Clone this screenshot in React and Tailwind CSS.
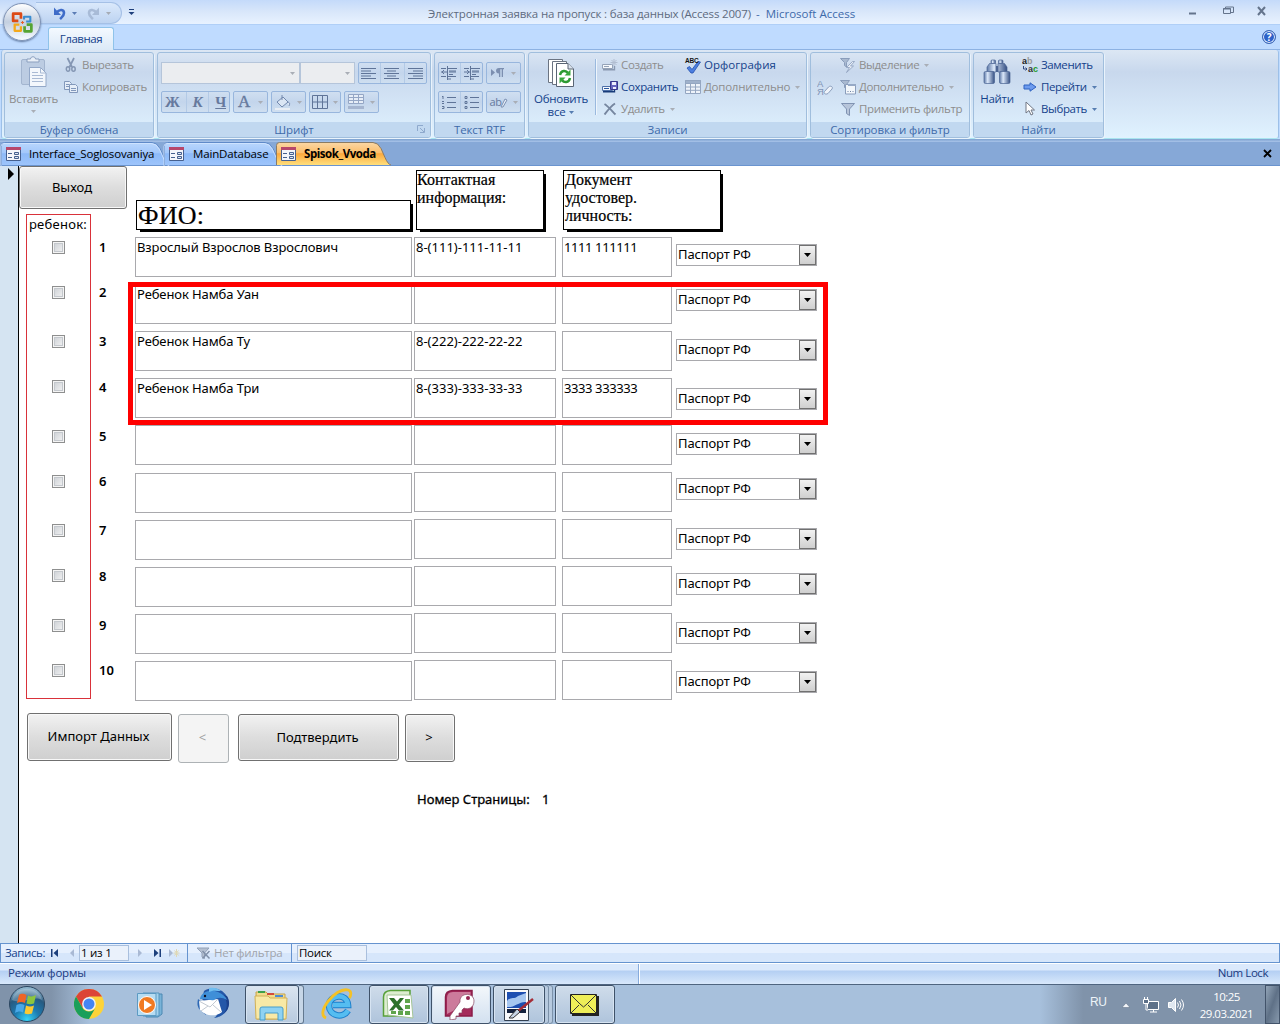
import React from "react";

const ui = "font-['Open_Sans','Noto_Sans',sans-serif] text-[11.5px] tracking-[-0.25px] whitespace-nowrap";

function Down({ c = "#8f9299" }) {
  return (
    <svg width="5" height="3" viewBox="0 0 5 3" className="shrink-0">
      <path d="M0 0h5L2.5 3z" fill={c} />
    </svg>
  );
}

function Group({ title, width, children, launcher }) {
  return (
    <section className={"flex h-[86px] shrink-0 flex-col overflow-hidden rounded-[3px] border border-[#a0bedd] shadow-[1px_1px_0_#e9f3fc] " + width}>
      <div className="flex h-[69px] shrink-0">{children}</div>
      <div className="relative flex h-[16px] items-center justify-center bg-[#c1d8f0] text-[#3e6aaa]">
        <span className="leading-[14px] tracking-[-0.1px]">{title}</span>
        {launcher && (
          <svg className="absolute right-[5px] top-[3px]" width="8" height="8" fill="none" stroke="#8ea9cd">
            <path d="M.5 6V.5H6M3 3l4 4M7.500 3v4.500H3" />
          </svg>
        )}
      </div>
    </section>
  );
}

function Cmd({ icon, label, on, arrow }) {
  return (
    <div className={"flex h-[22px] items-center " + (on ? "text-[#15428b]" : "text-[#8d8d8d]")}>
      <span className="mr-[3px] flex w-[16px] shrink-0 justify-center">{icon}</span>
      <span>{label}</span>
      {arrow && <span className="ml-[5px]"><Down c={on ? "#567db1" : "#a9aeb6"} /></span>}
    </div>
  );
}

function Box({ width, children }) {
  return (
    <div className={"flex h-[22px] shrink-0 items-center justify-around rounded-[2px] border border-[#98b6dd] bg-linear-to-b from-[#d0dff1] via-[#c3d5ec] to-[#cfdff0] text-[#66799d] " + width}>
      {children}
    </div>
  );
}

const Vr = () => <span className="h-full w-px bg-[#b3cae6]" />;

function Lines({ d, color = "#5f7498" }) {
  return (
    <svg width="16" height="14" stroke={color} fill="none" className="shrink-0">
      <path d={d} />
    </svg>
  );
}

function PasteIcon() {
  return (
    <svg width="28" height="32" viewBox="0 0 28 32">
      <rect x="1.500" y="3.500" width="23" height="25" rx="1.500" fill="#bccce2" stroke="#a3b5cf" />
      <path d="M7 6V3h3.500c0-3 5-3 5 0H19v3z" fill="#e9eff7" stroke="#8b9fbe" />
      <path d="M9.500 11.500h11l5.500 5.500v13.500H9.500z" fill="#f3f7fc" stroke="#93a8c8" />
      <path d="M20.500 11.500V17H26M12 16.500h6M12 19.500h11M12 22.500h11M12 25.500h11" fill="none" stroke="#a9bad4" />
    </svg>
  );
}

function CutIcon() {
  return (
    <svg width="16" height="16" fill="none" stroke="#8496b3">
      <path d="M4.500 1l4.500 9M11 1L6.500 10" strokeWidth="1.700" />
      <ellipse cx="5" cy="12" rx="1.700" ry="2.300" strokeWidth="1.500" />
      <ellipse cx="10.500" cy="12" rx="1.700" ry="2.300" strokeWidth="1.500" />
    </svg>
  );
}

function CopyIcon() {
  return (
    <svg width="16" height="14" fill="#e6eef8" stroke="#8298bb">
      <path d="M1.500 1.500h5l2 2v6h-7zM3 4.500h3M3 6.500h4" />
      <path d="M6.500 4.500h6l2 2v6h-8zM8 8.500h5M8 10.500h5" />
    </svg>
  );
}

function RefreshIcon() {
  return (
    <svg width="27" height="30" viewBox="0 0 27 30">
      <path d="M.5 1.500h14v23H.500z" fill="#fff" stroke="#6b7482" />
      <path d="M4.500 3.500h14v23h-14z" fill="#fff" stroke="#6b7482" />
      <path d="M8.500 5.500H20l5.500 5.500v17.500h-17z" fill="#fff" stroke="#5a6575" />
      <path d="M20 5.500V11h5.500" fill="#dbe3ed" stroke="#5a6575" />
      <path d="M12 17c1-5 6-5 8-2M22 20c-1 5-6 5-8 2" fill="none" stroke="#2d9a33" strokeWidth="2.400" />
      <path d="M22.500 11.500v6h-6zM11.500 25.500v-6h6z" fill="#38a83c" />
    </svg>
  );
}

function RecordIcon({ kind }) {
  const on = kind === "save";
  return (
    <svg width="16" height="14" viewBox="0 0 16 14">
      <path d="M.5 6.500h10v4H.500z" fill="#f5f8fc" stroke={on ? "#4e70a8" : "#95a3b8"} />
      <path d="M2 8.500h5" stroke={on ? "#2856a0" : "#95a3b8"} />
      <path d="M1 11.700h11.500V8" fill="none" stroke={on ? "#173a79" : "#8998b0"} strokeWidth="1.400" />
      {on ? (
        <g>
          <path d="M8.500 1.500h7v8h-7z" fill="#6663bd" stroke="#38378c" />
          <path d="M10 2h4v3h-4zM11 7h3v2h-3z" fill="#eef" />
        </g>
      ) : (
        <path d="M12 1v7M8.500 4.500h7M9.500 2l5 5M14.500 2l-5 5" stroke="#b1bdd0" />
      )}
    </svg>
  );
}

function DeleteIcon() {
  return (
    <svg width="14" height="14" stroke="#76869f" strokeWidth="1.900" fill="none">
      <path d="M1.500 2C5 4 9 9 12.500 12.500M12 1.500C8 4 5 8 1.500 12.500" />
    </svg>
  );
}

function SpellIcon() {
  return (
    <svg width="18" height="17" viewBox="0 0 18 17" className="shrink-0">
      <path d="M3 11l2.500-1.500L8 12.500l6-8 2.500.5L9 16H7z" fill="#4d7fe0" stroke="#2550ad" strokeWidth=".8" />
      <text x="1" y="6" fontSize="6.500" fontWeight="bold" fontFamily="Liberation Sans, sans-serif" fill="#111" letterSpacing="-.2">ABC</text>
    </svg>
  );
}

function TableIcon() {
  return (
    <svg width="16" height="15" stroke="#94a6c1">
      <path d="M.5.500h15v13H.500z" fill="#eef3fa" />
      <path d="M.5.500h15v3H.500z" fill="#9fb1cb" />
      <path d="M.5 7h15M.5 10.300h15M5.500 3.500v10M10.500 3.500v10" fill="none" />
    </svg>
  );
}

function Funnel({ extra }) {
  return (
    <svg width="16" height="15" viewBox="0 0 16 15">
      {!extra && <path d="M1.500 1.500h13L9.500 7v6.500l-3-2V7z" fill="#b7c5da" stroke="#8093b2" />}
      {(extra === "bolt" || extra === "form") && <path d="M.5.500h9L6.500 4.500V9l-2-1.500v-3z" fill="#a9b9d0" stroke="#8a9dbb" />}
      {extra === "bolt" && <path d="M12.500 3.500l-6 6h3l-3 5 7-6.500h-3l4-4.500z" fill="#e8eef7" stroke="#8a9dbb" strokeWidth=".8" />}
      {extra === "form" && (
        <g>
          <path d="M5.500 4.500h10v9.500h-10z" fill="#f3f7fb" stroke="#8a9dbb" />
          <path d="M8 4h8v2H8z" fill="#96a9c6" />
          <path d="M7.500 11.500h1M10 11.500h1M12.500 11.500h1" stroke="#6f83a5" />
        </g>
      )}
      {extra === "x" && (
        <g>
          <path d="M1 2h12L8.500 7v5.500L6 11V7z" fill="#b5c0d1" stroke="#93a1b8" />
          <path d="M6.500 5l7 7.500M13.500 5l-7 7.500" stroke="#8090a9" strokeWidth="1.500" />
        </g>
      )}
    </svg>
  );
}

function SortClear() {
  return (
    <svg width="17" height="17" viewBox="0 0 17 17" className="shrink-0">
      <text x="0" y="7.500" fontSize="9.500" fontFamily="Liberation Sans, sans-serif" fill="#7e92b4">А</text>
      <text x="0" y="16" fontSize="9.500" fontFamily="Liberation Sans, sans-serif" fill="#7e92b4">Я</text>
      <path d="M7.500 12.500l4-4.500c2-2 5 0 3.500 2l-4 4.500c-2 1.500-5 0-3.500-2z" fill="#eef3fa" stroke="#8a9dbb" />
    </svg>
  );
}

function Binoculars() {
  return (
    <svg width="28" height="26" viewBox="0 0 28 26">
      <defs>
        <linearGradient id="bino">
          <stop offset="0" stopColor="#5b77a6" /><stop offset=".35" stopColor="#dbe8fa" /><stop offset="1" stopColor="#344f83" />
        </linearGradient>
      </defs>
      <path d="M11 7h6v6h-6z" fill="#4d6696" />
      <g fill="url(#bino)" stroke="#4a6494" strokeWidth=".7">
        <rect x="8" y="1" width="4.500" height="3.500" rx="1" />
        <rect x="15.500" y="1" width="4.500" height="3.500" rx="1" />
        <path d="M6.500 4.500H13v8.500H4V8zM15 4.500h6.500L24 8v5h-9z" />
        <rect x="1" y="12.500" width="10.500" height="12" rx="1.500" />
        <rect x="16.500" y="12.500" width="10.500" height="12" rx="1.500" />
      </g>
    </svg>
  );
}

function ReplaceIcon() {
  return (
    <svg width="17" height="17" viewBox="0 0 17 17" className="shrink-0" fontFamily="Liberation Sans, sans-serif" fontSize="9" fontWeight="bold">
      <text x="0" y="7" fill="#222">a</text>
      <text x="5" y="7" fill="#999">b</text>
      <text x="6" y="15" fill="#333">a</text>
      <text x="11" y="15" fill="#1f9a2c">c</text>
      <path d="M1.500 9v3H5M3.500 10.500L5 12l-1.500 1.500" fill="none" stroke="#334a80" />
    </svg>
  );
}

function GoIcon() {
  return (
    <svg width="14" height="10">
      <path d="M1 3h6V.800L13 5 7 9.200V7H1z" fill="#6d9bee" stroke="#2f62c0" />
    </svg>
  );
}

function CursorIcon() {
  return (
    <svg width="12" height="16">
      <path d="M2 1v11l3-2.500L7 14l2-1-2-4h3.500z" fill="#fff" stroke="#707784" />
    </svg>
  );
}

function OfficeLogo() {
  return (
    <svg width="25" height="25" viewBox="0 0 24 24" fill="none">
      <path d="M10.500 8.500V3.500H3V10.500H8" stroke="#dc4a16" strokeWidth="2.600" strokeLinejoin="round" />
      <path d="M13.500 9V6.500h6V11H15.500" stroke="#3a8cd0" strokeWidth="2" strokeLinejoin="round" />
      <path d="M9 14H4.500v6h6V15.500" stroke="#f4a91b" strokeWidth="2.200" strokeLinejoin="round" />
      <path d="M14 15.500v5h6.500V14H16" stroke="#55a432" strokeWidth="2.600" strokeLinejoin="round" />
      <path d="M10.500 12h3M12 10.500v3" stroke="#e8632a" />
    </svg>
  );
}

function TitleBar() {
  return (
    <header className="relative flex h-[25px] shrink-0 items-start border-b border-[#b0cff7] bg-linear-to-b from-[#c4dafa] via-[#d9e7fa] to-[#e8f2ff]">
      <div className="absolute left-[3px] top-[3px] z-10 flex size-[38px] items-center justify-center rounded-full border border-[#7f93b5] bg-linear-to-b from-[#ffffff] via-[#c3cfe0] to-[#f7fbff] shadow-[0_1px_2px_#6079a0]">
        <OfficeLogo />
      </div>
      <div className="ml-[36px] mt-[2px] flex h-[22px] w-[86px] items-center rounded-r-full border border-l-0 border-[#a5c0e6] bg-linear-to-b from-[#dbe9fb] to-[#bdd3f1] pl-[17px]">
        <svg width="14" height="13" fill="none" stroke="#3f6cc8" strokeWidth="2.600">
          <path d="M3 6c4-5 8-3 8 0s-2 4-4 6" /><path d="M1 .5v7.500h7z" fill="#3f6cc8" stroke="none" />
        </svg>
        <span className="ml-[5px]"><Down c="#5b7cb5" /></span>
        <svg width="14" height="13" fill="none" stroke="#a8bbd7" strokeWidth="2.600" className="ml-[9px]">
          <path d="M11 6C7 1 3 3 3 6s2 4 4 6" /><path d="M13 .5v7.500H6z" fill="#a8bbd7" stroke="none" />
        </svg>
        <span className="ml-[6px]"><Down c="#a5abb5" /></span>
      </div>
      <svg width="7" height="7" className="ml-[6px] mt-[9px]"><path d="M1 .500h5" stroke="#1e3f7c" /><path d="M.5 3h6l-3 3z" fill="#1e3f7c" /></svg>
      <div className="ml-[293px] mt-[5px] flex leading-[17px] text-[#5e6b80] tracking-[-0.17px]">
        <span className="w-[328px]">Электронная заявка на пропуск : база данных (Access 2007)</span>
        <span className="text-[#3e6aaa] tracking-[0px]">-&nbsp; Microsoft Access</span>
      </div>
      <svg width="82" height="14" className="absolute right-[10px] top-[5px]" fill="none" stroke="#64748c">
        <path d="M1 8.500h7" strokeWidth="2" />
        <path d="M35.500 3.500h7v5h-7zM35 4h8M37.500 3V2h8v5.500H43" />
        <path d="M70 2l7 8M77 2l-7 8" strokeWidth="2" />
      </svg>
    </header>
  );
}

function Ribbon() {
  return (
    <div className="shrink-0 bg-[#bfdbff]">
      <div className="flex h-[25px] items-end justify-between border-b border-[#8db2e3]">
        <div className="mb-[-1px] ml-[48px] flex h-[23px] w-[66px] items-center justify-center rounded-t-[3px] border border-b-0 border-[#8fc3ea] bg-linear-to-b from-[#f4f9ff] to-[#dbe9f7] text-[#15428b] tracking-[-0.45px]">Главная</div>
        <div className="mb-[5px] mr-[4px] flex size-[14px] items-center justify-center rounded-full border border-[#3f69b5] bg-[#2d62c9] text-[10px] font-bold text-white ring-1 ring-inset ring-[#e6f0ff]">?</div>
      </div>
      <div className="mx-[1px] flex h-[89px] gap-[3px] rounded-[3px] border border-t-0 border-[#9dc0e8] border-b-[#a8e4ef] bg-linear-to-b from-[#dce7f4] from-0% via-[#c8d8ed] via-25% to-[#e0f2ff] pl-[2px] pt-[2px]">
        <Group title="Буфер обмена" width="w-[150px]">
          <div className="flex w-[57px] flex-col items-center pt-[3px] text-[#8d8d8d]">
            <PasteIcon />
            <span className="mt-[3px] leading-[16px]">Вставить</span>
            <span className="mt-[3px] flex"><Down c="#a9aeb6" /></span>
          </div>
          <div className="ml-px flex flex-col pt-[1px] tracking-[-0.25px]">
            <Cmd icon={<CutIcon />} label="Вырезать" />
            <Cmd icon={<CopyIcon />} label="Копировать" />
          </div>
        </Group>
        <Group title="Шрифт" width="w-[274px]" launcher>
          <div className="flex flex-col gap-[7px] pl-[3px] pt-[9px]">
            <div className="flex">
              <div className="flex h-[22px] w-[139px] items-center justify-end border border-[#b5c5da] bg-[#ebedf0] pr-[4px]"><Down c="#a9aeb6" /></div>
              <div className="flex h-[22px] w-[55px] items-center justify-end border border-[#b5c5da] bg-[#ebedf0] pr-[4px]"><Down c="#a9aeb6" /></div>
              <div className="ml-[3px] flex">
                <Box width="w-[69px]">
                  <Lines d="M0 2.500h15M0 5h10M0 7.500h15M0 10h10M0 12.500h15" /><Vr />
                  <Lines d="M0 2.500h15M3 5h9M0 7.500h15M3 10h9M0 12.500h15" /><Vr />
                  <Lines d="M0 2.500h15M5 5h10M0 7.500h15M5 10h10M0 12.500h15" />
                </Box>
              </div>
            </div>
            <div className="flex gap-[3px] font-['Liberation_Serif',serif] text-[15px] font-bold">
              <Box width="w-[69px]"><span>Ж</span><Vr /><span className="italic">К</span><Vr /><span className="underline">Ч</span></Box>
              <Box width="w-[35px]"><span className="text-[17px] font-normal leading-[18px] [-webkit-text-stroke:0.4px_#66799d]">A</span><Down c="#a9aeb6" /></Box>
              <Box width="w-[35px]">
                <svg width="16" height="16" fill="#dbe6f4" stroke="#7288ad"><path d="M2 8l6-5 5 5-6 5zM7 1v5M12 8c3 0 3 2 2 4" /><path d="M0 15h15" stroke="#e9eef5" strokeWidth="2" /></svg>
                <Down c="#a9aeb6" />
              </Box>
              <Box width="w-[32px]"><Lines d="M.5.500h15v13H.500zM.5 7h15M5.500 0v14M10.500 0v14" /><Down c="#a9aeb6" /></Box>
              <Box width="w-[35px]">
                <svg width="16" height="16" fill="#e6edf7" stroke="#94a6c5"><path d="M.5.500h15v9H.500zM.5 3.500h15M.5 6.500h15M5.500 0v10M10.500 0v10" /><path d="M0 13.500h16" stroke="#a5b5d0" strokeWidth="3" /></svg>
                <Down c="#a9aeb6" />
              </Box>
            </div>
          </div>
        </Group>
        <Group title="Текст RTF" width="w-[91px]">
          <div className="flex flex-col gap-[7px] pl-[3px] pt-[9px]">
            <div className="flex gap-[3px]">
              <Box width="w-[45px]">
                <Lines d="M0 2.500h5M7 2.500h9M0 6h6M3 4L1 6L3 8M8 5h7M8 6h7M8 8.500h4M0 10.500h5M7 10.500h8M7 13h3M6.500 0v14" /><Vr />
                <Lines d="M0 2.500h5M7 2.500h9M0 6h6M3 4L5 6L3 8M8 5h7M8 6h7M8 8.500h4M0 10.500h5M7 10.500h8M7 13h3M6.500 0v14" />
              </Box>
              <Box width="w-[35px]">
                <svg width="13" height="12" fill="#7c8fb0"><path d="M0 2l4 3.500L0 9zM8 10V6.500C4 6.500 4 1 8 1h5v1.300h-1V10h-1.300V2.300H9.300V10z" /></svg>
                <Down c="#a9aeb6" />
              </Box>
            </div>
            <div className="flex gap-[3px]">
              <Box width="w-[45px]">
                <Lines d="M1 2l1-1v3M1 6.500h2M1 8.500h2M1 11.500h2v2H1M6 2.500h9M6 7.500h9M6 12.500h9" /><Vr />
                <Lines d="M1 1.500h2v2H1zM1 6.500h2v2H1zM1 11.500h2v2H1zM6 2.500h9M6 7.500h9M6 12.500h9" />
              </Box>
              <Box width="w-[35px]">
                <span className="flex items-start text-[11px] leading-[12px]">ab<svg width="8" height="13" fill="#e8eff8" stroke="#7d91b3" className="-ml-[2px]"><path d="M1 11l4-8 2 1-4 7z" /></svg></span>
                <Down c="#a9aeb6" />
              </Box>
            </div>
          </div>
        </Group>
        <Group title="Записи" width="w-[279px]">
          <div className="flex w-[64px] flex-col items-center pt-[5px] tracking-[-0.25px] text-[#15428b]">
            <RefreshIcon />
            <span className="mt-[3px] leading-[16px]">Обновить</span>
            <span className="-mt-[3px] flex items-center gap-[4px] leading-[16px]">все <Down c="#567db1" /></span>
          </div>
          <div className="ml-[2px] mt-[6px] h-[56px] w-[2px] border-l border-[#9ab9de] bg-[#eef5fc]" />
          <div className="ml-[5px] flex w-[83px] flex-col pt-[1px] tracking-[-0.35px]">
            <Cmd icon={<RecordIcon />} label="Создать" />
            <Cmd icon={<RecordIcon kind="save" />} label="Сохранить" on />
            <Cmd icon={<DeleteIcon />} label="Удалить" arrow />
          </div>
          <div className="flex flex-col pt-[1px] tracking-[-0.25px]">
            <Cmd icon={<SpellIcon />} label={<span className="tracking-[0.05px]">Орфография</span>} on />
            <Cmd icon={<TableIcon />} label="Дополнительно" arrow />
          </div>
        </Group>
        <Group title="Сортировка и фильтр" width="w-[160px]">
          <div className="ml-[6px] flex w-[23px] items-center"><SortClear /></div>
          <div className="flex flex-col pt-[1px] tracking-[-0.35px]">
            <Cmd icon={<Funnel extra="bolt" />} label="Выделение" arrow />
            <Cmd icon={<Funnel extra="form" />} label="Дополнительно" arrow />
            <Cmd icon={<Funnel />} label="Применить фильтр" />
          </div>
        </Group>
        <Group title="Найти" width="w-[131px]">
          <div className="flex w-[46px] flex-col items-center pt-[6px] text-[#15428b]">
            <Binoculars />
            <span className="mt-[6px] leading-[16px]">Найти</span>
          </div>
          <div className="ml-[2px] flex flex-col pt-[1px] tracking-[-0.4px]">
            <Cmd icon={<ReplaceIcon />} label="Заменить" on />
            <Cmd icon={<GoIcon />} label="Перейти" on arrow />
            <Cmd icon={<CursorIcon />} label="Выбрать" on arrow />
          </div>
        </Group>
      </div>
      <div className="h-[3px] bg-linear-to-b from-[#7da1cf] to-[#a9c4ea]" />
    </div>
  );
}

function FormIcon() {
  return (
    <svg width="15" height="14" className="shrink-0">
      <path d="M.5.500h14v13H.500z" fill="#f4f6fb" stroke="#46608f" />
      <path d="M0 0h15v3H0z" fill="#b7476b" />
      <path d="M2 6.500h4M2 10.500h4M8.500 5.500h4v2h-4zM8.500 9.500h4v2h-4z" fill="#dce5f3" stroke="#46608f" />
    </svg>
  );
}

const tabShapes = {
  wide: "M.5 23V3.500Q.5.500 3.500.500H151q5 0 8 6l5 11q2 5 5 5.500",
  mid: "M.5 23V3.500Q.5.500 3.500.500H101q5 0 8 6l5 11q2 5 5 5.500",
  active: "M.5 23V3.500Q.5.500 3.500.500H97q5 0 8 6l4 9q3 7 6 7.500",
};

function DocTab({ label, width, shape }) {
  const active = shape === "active";
  return (
    <div className={"relative flex h-[23px] shrink-0 items-center " + width}>
      <svg className="absolute left-0 top-0" width="100%" height="23" overflow="visible">
        <defs>
          <linearGradient id="tabBlue" x2="0" y2="1"><stop offset="0" stopColor="#b9d6fd" /><stop offset=".45" stopColor="#a3c8fb" /><stop offset=".5" stopColor="#8dbaf8" /><stop offset="1" stopColor="#9dc4fb" /></linearGradient>
          <linearGradient id="tabGold" x2="0" y2="1"><stop offset="0" stopColor="#fbd7a5" /><stop offset=".45" stopColor="#fcbf6c" /><stop offset=".5" stopColor="#fba93e" /><stop offset="1" stopColor="#ffdf7c" /></linearGradient>
        </defs>
        <path d={tabShapes[shape]} fill={active ? "url(#tabGold)" : "url(#tabBlue)"} stroke={active ? "#8b7b63" : "#5f8ac9"} />
        {!active && <path d={tabShapes[shape]} fill="none" stroke="#d4e6ff" strokeWidth=".8" transform="translate(-.5 1)" />}
      </svg>
      <div className="relative flex items-center">
        <span className="ml-[5px]"><FormIcon /></span>
        <span className={active ? "ml-[8px] font-bold tracking-[-0.45px]" : "ml-[8px] tracking-[-0.15px]"}>{label}</span>
      </div>
    </div>
  );
}

function DocTabs() {
  return (
    <nav className="flex h-[24px] shrink-0 items-end border-b border-[#6a94cf] bg-[#86a8d7] pl-[1px] text-black">
      <DocTab label="Interface_Soglosovaniya" width="w-[163px]" shape="wide" />
      <DocTab label={<span className="pl-px">MainDatabase</span>} width="w-[112px]" shape="mid" />
      <DocTab label="Spisok_Vvoda" width="w-[112px]" shape="active" />
      <svg width="9" height="9" className="mb-[7px] ml-auto mr-[8px]" stroke="#000" strokeWidth="1.800"><path d="M1 1l7 7M8 1L1 8" /></svg>
    </nav>
  );
}

const checks = ["mt-[9px]", "mt-[32px]", "mt-[36px]", "mt-[32px]", "mt-[37px]", "mt-[32px]", "mt-[36px]", "mt-[32px]", "mt-[37px]", "mt-[32px]"];
const numbers = ["mt-[25px]", "mt-[29px]", "mt-[33px]", "mt-[30px]", "mt-[33px]", "mt-[29px]", "mt-[33px]", "mt-[30px]", "mt-[33px]", "mt-[29px]"];
const names = ["Взрослый Взрослов Взрослович", "Ребенок Намба Уан", "Ребенок Намба Ту", "Ребенок Намба Три", "", "", "", "", "", ""];
const phones = ["8-(111)-111-11-11", "", "8-(222)-222-22-22", "8-(333)-333-33-33", "", "", "", "", "", ""];
const docs = ["1111 111111", "", "", "3333 333333", "", "", "", "", "", ""];
const combos = ["", "mt-[23px]", "mt-[28px]", "mt-[27px]", "mt-[23px]", "mt-[23px]", "mt-[28px]", "mt-[23px]", "mt-[27px]", "mt-[27px]"];

function Fields({ values, low }) {
  return values.map((v, i) => (
    <div key={i} className={"h-[40px] shrink-0 border border-[#a9a9ad] px-[1px] leading-[19px] " + (i === 0 ? "" : i === 5 && low ? "mt-[8px]" : "mt-[7px]")}>{v}</div>
  ));
}

function Btn({ children, size, off }) {
  return (
    <button className={"flex shrink-0 items-center justify-center rounded-[3px] border pr-[2px] " + (off ? "border-[#adb2b5] bg-[#f4f4f4] text-[#a0a0a0] " : "border-[#707070] bg-linear-to-b from-[#f2f2f2] from-0% via-[#dddddd] via-50% to-[#cfcfcf] shadow-[inset_0_0_0_1px_#f8f8f8] ") + size}>
      {children}
    </button>
  );
}

function Header({ children, size }) {
  return <div className={"shrink-0 border border-black bg-white font-['Liberation_Serif',serif] shadow-[3px_3px_0_-1px_#000] [-webkit-text-stroke:0.2px_#000] " + size}>{children}</div>;
}

function Form() {
  return (
    <main className="flex h-[777px] shrink-0 bg-white font-['Noto_Sans',sans-serif] text-[13px] tracking-[0px] text-black">
      <div className="w-[19px] shrink-0 border-r border-black bg-[#d5e4f2] pl-[8px] pt-[2px]">
        <svg width="7" height="12"><path d="M0 0l6 6-6 6z" /></svg>
      </div>
      <div className="relative flex grow flex-col">
        <div className="flex h-[535px]">
          <div className="flex w-[116px] shrink-0 flex-col">
            <Btn size="h-[43px] w-[108px]">Выход</Btn>
            <div className="ml-[7px] mt-[5px] flex">
              <div className="flex h-[485px] w-[65px] flex-col items-center border border-[#d9323a]">
                <span className="mr-[1px] h-[17px] leading-[19px] tracking-[0.25px]">ребенок:</span>
                {checks.map((m, i) => (
                  <span key={i} className={"size-[13px] shrink-0 border border-[#8e8f8f] bg-linear-to-br from-[#c9cdd2] to-[#f6f6f6] shadow-[inset_0_0_0_1px_#f4f4f4,inset_0_0_0_2px_#c4c8cd] " + m} />
                ))}
              </div>
              <div className="ml-[8px] flex flex-col font-semibold">
                {numbers.map((m, i) => (
                  <span key={i} className={"h-[16px] shrink-0 leading-[16px] " + m}>{i + 1}</span>
                ))}
              </div>
            </div>
          </div>
          <div className="flex w-[277px] shrink-0 flex-col tracking-[-0.1px]">
            <Header size="ml-[1px] mt-[34px] mb-[7px] h-[30px] w-[275px] pl-[1px] text-[26px] leading-[30px] tracking-[0.2px]">ФИО:</Header>
            <Fields values={names} low />
          </div>
          <div className="ml-[2px] flex w-[142px] shrink-0 flex-col">
            <Header size="ml-[2px] mt-[4px] mb-[7px] h-[60px] w-[128px] text-[16px] leading-[18px]">Контактная<br />информация:</Header>
            <Fields values={phones} />
          </div>
          <div className="ml-[6px] flex w-[110px] shrink-0 flex-col tracking-[-0.4px]">
            <Header size="ml-[1px] mt-[4px] mb-[7px] h-[60px] w-[158px] pl-[1px] text-[16px] leading-[18px] tracking-[0px]">Документ<br />удостовер.<br />личность:</Header>
            <Fields values={docs} />
          </div>
          <div className="ml-[4px] flex w-[141px] shrink-0 flex-col pt-[78px] tracking-[-0.15px]">
            {combos.map((m, i) => (
              <div key={i} className={"flex h-[22px] shrink-0 items-center justify-between border border-[#a9a9ad] pl-[1px] " + m}>
                <span>Паспорт РФ</span>
                <span className="flex h-[20px] w-[17px] items-center justify-center border border-[#707070] bg-linear-to-b from-[#f2f2f2] to-[#cfcfcf]">
                  <svg width="7" height="4"><path d="M0 0h7L3.500 4z" /></svg>
                </span>
              </div>
            ))}
          </div>
        </div>
        <div className="ml-[8px] mt-[12px] flex">
          <Btn size="h-[48px] w-[145px]">Импорт Данных</Btn>
          <Btn size="ml-[6px] mt-[1px] h-[49px] w-[51px] pb-[1px]" off>&lt;</Btn>
          <Btn size="ml-[9px] mt-[1px] h-[47px] w-[161px]">Подтвердить</Btn>
          <Btn size="ml-[6px] mt-[1px] h-[48px] w-[50px]">&gt;</Btn>
        </div>
        <div className="ml-[398px] mt-[27px] flex leading-[18px] [-webkit-text-stroke:0.3px_#000]">
          <span className="w-[125px]">Номер Страницы:</span>
          <span>1</span>
        </div>
        <div className="pointer-events-none absolute left-[109px] top-[116px] h-[143px] w-[700px] border-5 border-[#ff0000]" />
      </div>
    </main>
  );
}

function Nav({ d, c = "#1c3f7c", m }) {
  return <svg width="9" height="8" className={"shrink-0 " + m} fill={c}><path d={d} /></svg>;
}

function RecordBar() {
  return (
    <div className="flex h-[20px] shrink-0 items-center border border-[#6593cf] bg-linear-to-b from-[#e6f0fe] from-50% to-[#d6e6fb] to-50% pl-[4px] text-[#15428b]">
      <span className="w-[46px] tracking-[-0.4px]">Запись:</span>
      <Nav d="M0 0h1.500v8H0zM7 0v8L2.500 4z" m="" />
      <Nav d="M5 0v8L1 4z" c="#a9b9d4" m="ml-[9px]" />
      <div className="ml-[1px] flex h-[16px] w-[50px] items-center border border-[#a9bfdd] bg-[#eaf1fb] pl-px text-black">1 из 1</div>
      <Nav d="M1 0l4 4-4 4z" c="#a9b9d4" m="ml-[8px]" />
      <Nav d="M0 0l4.500 4L0 8zM5.500 0H7v8H5.500z" m="ml-[8px]" />
      <svg width="11" height="9" className="ml-[6px] shrink-0"><path d="M0 0l4 4-4 4z" fill="#a9b9d4" /><path d="M7.500 0v8M4.500 4h6M5.500 1.500l4 5M9.500 1.500l-4 5" stroke="#dfd8b4" /></svg>
      <span className="ml-[7px] h-full w-px bg-[#6593cf]" />
      <span className="ml-[8px]"><Funnel extra="x" /></span>
      <span className="ml-[2px] w-[77px] text-[#a0a4ab] tracking-[-0.25px]">Нет фильтра</span>
      <span className="h-full w-px bg-[#6593cf]" />
      <div className="ml-[5px] flex h-[16px] w-[70px] items-center border border-[#a9bfdd] bg-[#eaf1fb] pl-[1px] text-black">Поиск</div>
    </div>
  );
}

function StatusBar() {
  return (
    <div className="flex h-[21px] shrink-0 items-center border-t border-white bg-linear-to-b from-[#dbe9fc] from-30% via-[#b4cff3] via-35% to-[#d8e8fb] text-[#1a3a80]">
      <span className="mb-[2px] ml-[8px] w-[630px] tracking-[-0.2px]">Режим формы</span>
      <span className="h-full w-[2px] border-l border-[#87abdc] bg-white" />
      <span className="mb-[2px] ml-auto mr-[12px] tracking-[-0.45px]">Num Lock</span>
    </div>
  );
}

function Win() {
  return (
    <svg width="40" height="40" viewBox="0 0 40 40">
      <defs>
        <radialGradient id="orb" cy=".95" r=".9"><stop offset="0" stopColor="#35d5f8" /><stop offset=".4" stopColor="#1d7ab0" /><stop offset=".75" stopColor="#275a80" /><stop offset="1" stopColor="#8db4cc" /></radialGradient>
      </defs>
      <circle cx="20" cy="20" r="17.500" fill="url(#orb)" stroke="#2c4660" />
      <path d="M5 16C8 1 32 1 35 16c-9-5-20 5-30 0z" fill="#fff" opacity=".25" />
      <path d="M12 11c3-2 5-1 7.500 0L18 19c-3-1.500-5-1.500-8 0z" fill="#ef6527" />
      <path d="M21 11.500c3 1.500 5 1 8-.5l-2 8.500c-3 1-5 1-7.500 0z" fill="#8cc63e" />
      <path d="M9.500 21c3-1.500 5-1.500 8 0L16 28.500c-3-1.500-5-1-8 .5z" fill="#49a8e8" />
      <path d="M19 21.500c3 1.200 5 1.200 8 0l-2 8c-3 1-5 1-7.500 0z" fill="#fcc931" />
    </svg>
  );
}

function Chrome() {
  return (
    <svg width="30" height="30" viewBox="0 0 30 30">
      <circle cx="15" cy="15" r="15" fill="#fdd338" />
      <path d="M2 7.500A15 15 0 0 1 28 7.500H15L8.500 18.700z" fill="#dc4437" />
      <path d="M2 7.500l6.500 11.200A7.500 7.500 0 0 0 21.500 18.700L15 30A15 15 0 0 1 2 7.500z" fill="#1a9f5a" />
      <circle cx="15" cy="15" r="6.900" fill="#f3f3f3" /><circle cx="15" cy="15" r="5.500" fill="#4485f3" />
    </svg>
  );
}

function Media() {
  return (
    <svg width="28" height="26" viewBox="0 0 28 26">
      <path d="M9 2h16v20l-4 3H9z" fill="#79b3d8" stroke="#4d88b2" /><path d="M6 1h16v23H6z" fill="#a4d2ec" stroke="#5495bf" />
      <path d="M.5 1.500H19v22H.500z" fill="#b6dcf2" stroke="#5c9ac3" />
      <circle cx="10" cy="13" r="8.500" fill="#f17a22" stroke="#fff" /><path d="M7 8l8 5-8 5z" fill="#fff" />
    </svg>
  );
}

function Thunderbird() {
  return (
    <svg width="34" height="32" viewBox="0 0 34 32">
      <path d="M8 4C16-2 29 2 32 12c3 10-4 18-14 19 2-1 3-3 3-4L6 12z" fill="#2457a8" />
      <path d="M27 8c5 6 5 14 0 19 6-3 8-12 4-18z" fill="#1b418c" />
      <path d="M2 12c-1 5-1 8 3 12l5 4-3-12z" fill="#2d68b5" />
      <path d="M3 14l19-2 4 13c-7 6-18 3-22-2z" fill="#fff" />
      <path d="M3 14l11 6 8-8M5 24l7-5M25 25l-8-7" fill="none" stroke="#c2c9d2" />
      <path d="M4 12C5 5 14 2 22 5c5 2 8 5 9 8-5-3-9-3-13 0-3 1-6-1-9-1z" fill="#3f8fd8" />
      <path d="M13 1c5-1 9 0 12 3-4 0-8-1-12 1z" fill="#6fbdf0" />
      <circle cx="9" cy="9" r="1.200" fill="#112" />
    </svg>
  );
}

function Folder() {
  return (
    <svg width="34" height="32" viewBox="0 0 34 32">
      <path d="M2 3h10l2 2h17v25H3z" fill="#f1dc8c" stroke="#c7a348" />
      <path d="M4 2h7v2H4z" fill="#3da04a" /><path d="M13 4h7v2h-7z" fill="#d34b3c" /><path d="M21 6h8v2h-8z" fill="#4a8cd8" />
      <path d="M1 7h13l2 2h17l-1 21H2z" fill="#f8e9a6" stroke="#d1b056" />
      <path d="M6 31V20q0-2 2-2h19q2 0 2 2v11h-5v-7H11v7z" fill="#8ed2f2" stroke="#479dca" />
    </svg>
  );
}

function Explorer() {
  return (
    <svg width="32" height="32" viewBox="0 0 32 32" fill="none">
      <path d="M27 22.500C22 31 8 28 8 17.500S26 4 27 17H12" stroke="#1d7fcb" strokeWidth="6.500" />
      <path d="M27 22.500C22 31 8 28 8 17.500S26 4 27 17H12" stroke="#55bdf1" strokeWidth="4.600" />
      <path d="M5 30C-6 26 14-1 27 2c4 1 3 5 1.500 8" stroke="#f4c126" strokeWidth="2.800" />
    </svg>
  );
}

function Excel() {
  return (
    <svg width="32" height="31" viewBox="0 0 32 31">
      <path d="M1.500 27V8q0-6 7-6.500H28V27z" fill="#dcedd0" stroke="#57a039" strokeWidth="1.500" />
      <path d="M5 6h24l2 23-25-3z" fill="#fff" stroke="#a5c596" />
      <path d="M7 9h5l3 3.500L18 9h4l-5 6.500 5 6h-5l-3-3.500-3 3.500H7l5-6z" fill="#2c7129" />
      <path d="M23 10h5v4h-5zM23 16h5v4h-5zM23 22h5v4h-5zM16 22h5v4h-5zM9 22h5v3H9z" fill="#5fa44b" />
    </svg>
  );
}

function AccessIcon() {
  return (
    <svg width="32" height="31" viewBox="0 0 32 31">
      <path d="M1.500 27V8q0-6 7-6.500H28V27z" fill="#a52b5b" stroke="#8b1c48" strokeWidth="1.500" />
      <path d="M3 25V9q0-6 6-6h17.500v10z" fill="#cc7b9b" />
      <path d="M16 13c-1-10 14-10 14-1 0 7-6 9-10 7l-2 2v3h-3v3h-3v3l-6 1v-4z" fill="#fff" stroke="#884460" strokeWidth=".7" />
      <circle cx="24" cy="9" r="2" fill="#942552" />
    </svg>
  );
}

function Paint() {
  return (
    <svg width="32" height="32" viewBox="0 0 32 32">
      <path d="M2.500.500h24v31h-24z" fill="#f8f9fb" stroke="#323f50" />
      <path d="M5 3h19v16H5z" fill="#1e4fb1" /><path d="M5 12c4-5 7-1 11-5l8-3v9c-6-1-12 6-19 5z" fill="#a5c6f0" /><path d="M5 20h19v4H5z" fill="#13213d" />
      <path d="M31 10L16 22" stroke="#a52c36" strokeWidth="2.500" /><path d="M15 20l3 3-7 6H7z" fill="#c7d4e6" stroke="#333" />
    </svg>
  );
}

function Mail() {
  return (
    <svg width="29" height="22">
      <path d="M2 2h27v20H2z" fill="#222" /><path d="M.5.500h26v19H.500z" fill="#eeee58" stroke="#222" />
      <path d="M1 1l9 9 3.500 3 3.500-3 9-9M1 19l8-8M26 19l-8-8" fill="none" stroke="#333" />
    </svg>
  );
}

function Task({ children, cls }) {
  return <div className={"flex h-[39px] shrink-0 items-center justify-center rounded-[3px] border border-[#3f5269] pr-[2px] shadow-[inset_0_0_0_1px_#d7e4f2] " + cls}>{children}</div>;
}

function Taskbar() {
  return (
    <footer className="flex h-[40px] shrink-0 border-t border-[#4f6580] bg-linear-to-r from-[#8093aa] from-4% via-[#a7c0dc] via-[7%] to-[#a7c0dc] text-white">
      <div className="ml-[7px] -mt-px"><Win /></div>
      <div className="ml-[27px] mt-[4px]"><Chrome /></div>
      <div className="ml-[33px] mt-[7px]"><Media /></div>
      <div className="ml-[31px] mt-[2px]"><Thunderbird /></div>
      <Task cls="ml-[15px] w-[54px] bg-linear-to-b from-[#dbe5f0] to-[#b7cadf]"><Folder /></Task>
      <div className="h-[39px] w-[5px] rounded-r-[3px] border border-l-0 border-[#62788f] bg-[#c6d6e7]" />
      <div className="ml-[17px] mt-[3px]"><Explorer /></div>
      <Task cls="ml-[16px] w-[60px] bg-linear-to-b from-[#cfdcea] to-[#afc4dc]"><Excel /></Task>
      <Task cls="ml-[2px] w-[60px] bg-linear-to-b from-[#f3f7fb] to-[#d3e1f0]"><AccessIcon /></Task>
      <Task cls="ml-[2px] w-[52px] bg-linear-to-b from-[#cfdcea] to-[#afc4dc]"><Paint /></Task>
      <div className="h-[39px] w-[4px] rounded-r-[3px] border border-l-0 border-[#7c92aa] bg-[#b7cadf]" />
      <div className="h-[39px] w-[4px] rounded-r-[3px] border border-l-0 border-[#7c92aa] bg-[#b7cadf]" />
      <Task cls="ml-[2px] w-[60px] bg-linear-to-b from-[#cfdcea] to-[#afc4dc]"><Mail /></Task>
      <div className="ml-auto flex w-[240px] items-center bg-linear-to-r from-[#a7c0dc] to-[#8093aa] to-18% pl-[50px]">
        <span className="mb-[5px] font-['Liberation_Sans',sans-serif] text-[12px] tracking-[-0.3px] text-[#eef3f8]">RU</span>
        <svg width="8" height="5" className="ml-[15px] mt-[2px]"><path d="M0 4.500L4 0l4 4.500z" fill="#f3f6fa" stroke="#56687e" strokeWidth=".5" /></svg>
        <svg width="17" height="16" className="ml-[13px]" fill="#5d7189" stroke="#fff"><path d="M4.500 4.500h11v8h-11zM7 15h7M10.500 13v2" /><path d="M.5 2.500h5v4h-5zM1.500 0v3M4.500 0v3M3 7v6h2" /></svg>
        <svg width="17" height="16" className="ml-[7px]" fill="none" stroke="#fff"><path d="M1.500 5.500h3l4-4v13l-4-4h-3z" fill="#dfe7f0" /><path d="M10.500 5.500q2 2.500 0 5M12.500 4q3 4 0 8M14.500 2.500q4 5.500 0 11" /></svg>
        <div className="ml-auto mr-[12px] flex flex-col items-center tracking-[-0.55px]">
          <span className="leading-[17px]">10:25</span>
          <span className="leading-[17px]">29.03.2021</span>
        </div>
        <div className="h-full w-[15px] shrink-0 border border-[#42536a] bg-linear-to-br from-[#93a5b8] via-[#5f7187] to-[#8799ad]" />
      </div>
    </footer>
  );
}

export default function App() {
  return (
    <div className={"flex h-[1024px] w-[1280px] flex-col overflow-hidden " + ui}>
      <TitleBar />
      <Ribbon />
      <DocTabs />
      <Form />
      <RecordBar />
      <StatusBar />
      <Taskbar />
    </div>
  );
}
